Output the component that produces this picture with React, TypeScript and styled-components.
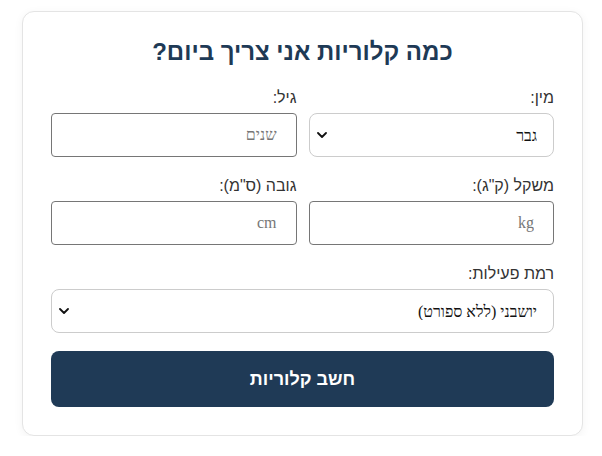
import styled, { createGlobalStyle } from "styled-components";

const GlobalStyle = createGlobalStyle`
  html, body {
    margin: 0;
    padding: 0;
    background: #ffffff;
    font-family: "Liberation Sans", Arial, sans-serif;
  }
`;

const Page = styled.div`
  padding: 11px 19px 0 22px;
`;

const Card = styled.form`
  box-sizing: border-box;
  width: 561px;
  padding: 25px 28px 28px;
  border: 1px solid #e4e4e4;
  border-radius: 12px;
  background: #ffffff;
  box-shadow: 0 2px 10px rgba(0, 0, 0, 0.05);
  direction: rtl;
`;

const Title = styled.h2`
  margin: 0 0 22px;
  font-size: 24px;
  line-height: 30px;
  font-weight: 700;
  text-align: center;
  color: #1e3a56;
`;

const Row = styled.div<{ $cols: number }>`
  display: grid;
  grid-template-columns: repeat(${(p) => p.$cols}, 1fr);
  column-gap: 12px;
  margin-bottom: 20px;
`;

const Field = styled.div`
  display: flex;
  flex-direction: column;
  gap: 6px;
`;

const Label = styled.label`
  font-size: 16px;
  line-height: 18px;
  color: #333333;
`;

const TextInput = styled.input`
  box-sizing: border-box;
  height: 44px;
  padding: 0 19px;
  border: 1px solid #767676;
  border-radius: 4px;
  font-family: "Liberation Serif", "Times New Roman", serif;
  font-size: 16px;
  text-align: right;
  &::placeholder {
    color: #767676;
  }
`;

const SelectWrap = styled.div`
  position: relative;
`;

const Select = styled.select`
  appearance: none;
  box-sizing: border-box;
  width: 100%;
  height: 44px;
  padding: 0 16px 0 30px;
  border: 1px solid #cccccc;
  border-radius: 8px;
  background: #ffffff;
  font-family: "Liberation Serif", "DejaVu Serif", serif;
  font-size: 16px;
  color: #111111;
`;

const Chevron = styled.svg`
  position: absolute;
  left: 8px;
  top: 19px;
  pointer-events: none;
`;

const Submit = styled.button`
  display: block;
  width: 100%;
  height: 56px;
  margin-top: -2px;
  border: none;
  border-radius: 8px;
  background: #1f3a56;
  color: #ffffff;
  font-family: "Liberation Sans", Arial, sans-serif;
  font-size: 18px;
  font-weight: 700;
`;

function Dropdown({ options }: { options: string[] }) {
  return (
    <SelectWrap>
      <Select defaultValue={options[0]}>
        {options.map((o) => (
          <option key={o}>{o}</option>
        ))}
      </Select>
      <Chevron width="10" height="6" viewBox="0 0 10 6">
        <path d="M1 1l4 4 4-4" fill="none" stroke="#111" strokeWidth="1.8" strokeLinecap="round" strokeLinejoin="round" />
      </Chevron>
    </SelectWrap>
  );
}

export default function App() {
  return (
    <Page>
      <GlobalStyle />
      <Card onSubmit={(e) => e.preventDefault()}>
        <Title>כמה קלוריות אני צריך ביום?</Title>
        <Row $cols={2}>
          <Field>
            <Label>מין:</Label>
            <Dropdown options={["גבר", "אישה"]} />
          </Field>
          <Field>
            <Label>גיל:</Label>
            <TextInput type="number" placeholder="שנים" />
          </Field>
        </Row>
        <Row $cols={2}>
          <Field>
            <Label>משקל (ק"ג):</Label>
            <TextInput type="number" placeholder="kg" />
          </Field>
          <Field>
            <Label>גובה (ס"מ):</Label>
            <TextInput type="number" placeholder="cm" />
          </Field>
        </Row>
        <Row $cols={1}>
          <Field>
            <Label>רמת פעילות:</Label>
            <Dropdown
              options={[
                "יושבני (ללא ספורט)",
                "פעילות קלה (1-3 ימים בשבוע)",
                "פעילות בינונית (3-5 ימים בשבוע)",
                "פעילות גבוהה (6-7 ימים בשבוע)",
              ]}
            />
          </Field>
        </Row>
        <Submit type="submit">חשב קלוריות</Submit>
      </Card>
    </Page>
  );
}
